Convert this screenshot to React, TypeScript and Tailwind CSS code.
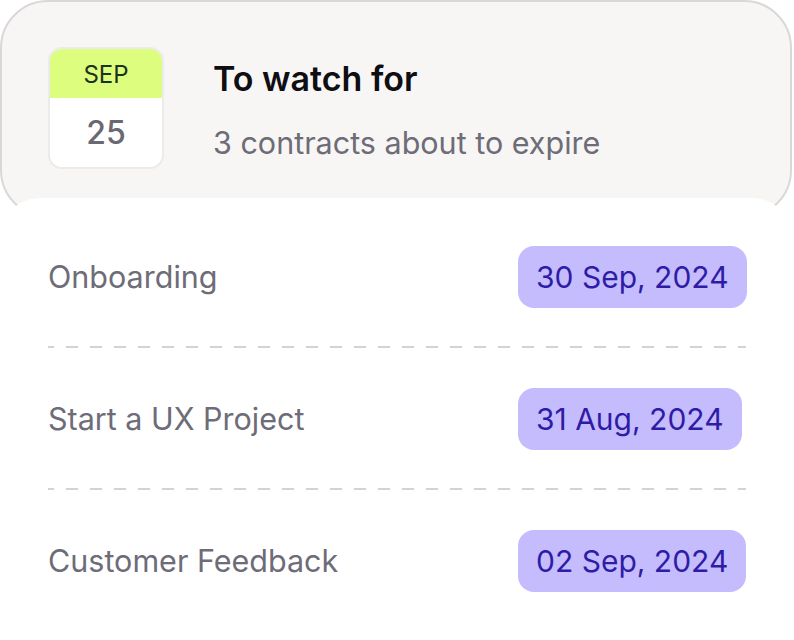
import React from "react";

const rows = [
  { name: "Onboarding", date: "30 Sep, 2024" },
  { name: "Start a UX Project", date: "31 Aug, 2024" },
  { name: "Customer Feedback", date: "02 Sep, 2024" },
];

function Divider() {
  return (
    <div className="mt-[38px] mb-[40px] h-[2px] w-full bg-[repeating-linear-gradient(to_right,#d2d2d2_0_6px,transparent_6px_18px,#d2d2d2_18px_24px)]" />
  );
}

export default function App() {
  return (
    <div className="w-[792px] bg-white font-['Inter','Noto_Sans',sans-serif]">
      <div className="h-[218px] rounded-[48px] border-2 border-[#d8d8d8] bg-[#f7f6f5] pl-[46px] pt-[45px]">
        <div className="flex items-start">
          <div className="flex h-[122px] w-[116px] flex-col overflow-hidden rounded-[14px] border-2 border-[#ebebeb] bg-white">
            <div className="flex h-[49px] items-center justify-center bg-[#dcfd7d] pt-[2px] text-[24px] leading-none text-[#1a331c]">
              SEP
            </div>
            <div className="flex flex-1 items-center justify-center text-[32px] font-medium leading-none text-[#696873]">
              25
            </div>
          </div>
          <div className="ml-[49px] flex flex-col pt-[11px]">
            <div className="text-[34px] font-semibold leading-[41px] text-[#0e0e13]">
              To watch for
            </div>
            <div className="mt-[26px] text-[30.5px] leading-[36px] text-[#6d6c77]">
              3 contracts about to expire
            </div>
          </div>
        </div>
      </div>
      <div className="relative -mt-5 rounded-t-[40px] bg-white pl-12 pr-[46px] pt-12 pb-12">
        {rows.map((r, i) => (
          <div key={r.name}>
            {i > 0 && <Divider />}
            <div className="grid h-[62px] grid-cols-[470px_auto] items-center">
              <span className="whitespace-nowrap text-[30.5px] leading-none text-[#6d6c78]">{r.name}</span>
              <span className="flex h-[62px] items-center justify-self-start whitespace-nowrap rounded-[16px] bg-[#c5bcfd] px-[18px] text-[30px] leading-none text-[#2f1ca6]">
                {r.date}
              </span>
            </div>
          </div>
        ))}
      </div>
    </div>
  );
}
